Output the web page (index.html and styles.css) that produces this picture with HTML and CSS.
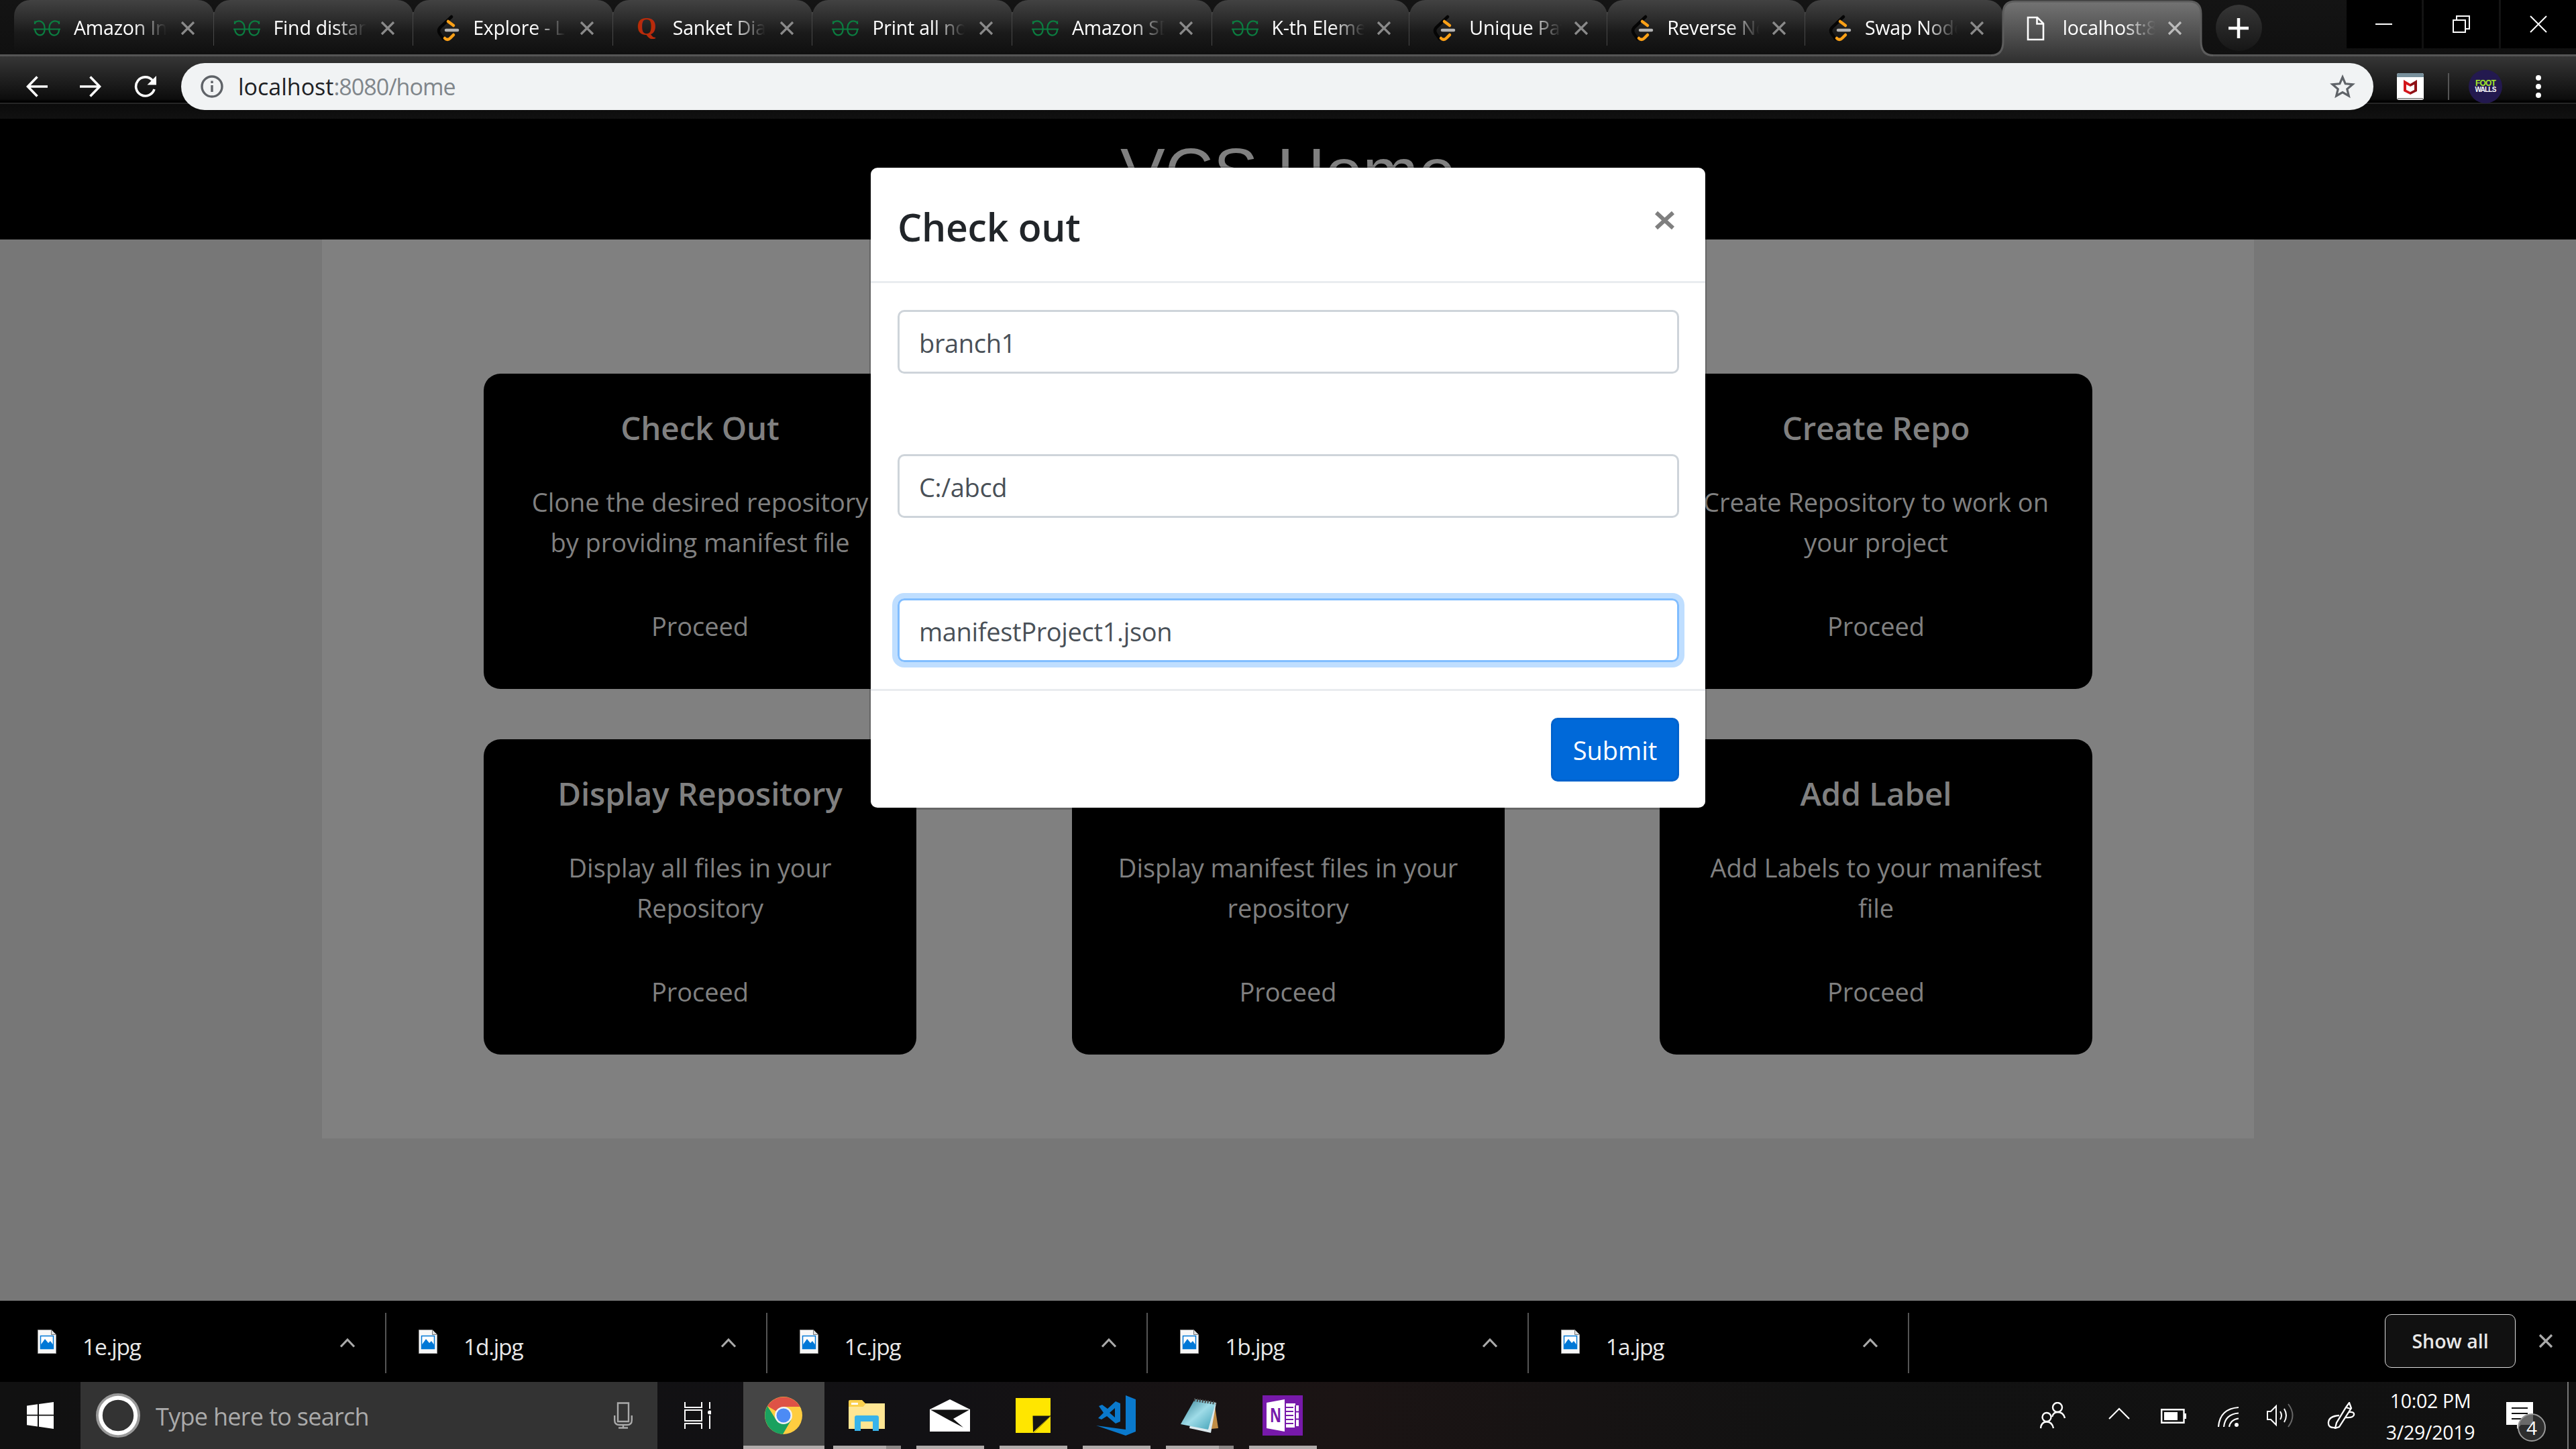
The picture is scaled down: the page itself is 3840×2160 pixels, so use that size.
FILE: index.html
```html
<!DOCTYPE html>
<html lang="en">
<head>
<meta charset="utf-8">
<title>VCS Home</title>
<link rel="stylesheet" href="styles.css">
</head>
<body>
<svg class="sprite" aria-hidden="true">
  <defs>
    <linearGradient id="g-active" x1="0" y1="0" x2="0" y2="1"><stop offset="0" stop-color="#747474"/><stop offset="1" stop-color="#353535"/></linearGradient>
    <linearGradient id="g-pad" x1="0" y1="0" x2="1" y2="1"><stop offset="0" stop-color="#2e7c90"/><stop offset=".5" stop-color="#9fdce8"/><stop offset="1" stop-color="#3d9fb5"/></linearGradient>
  </defs>
  <symbol id="i-gfg" viewBox="0 0 40 24"><g fill="none" stroke="#0b7d40" stroke-width="2.2"><path d="M2 6V1.500M2 4C5 1 9 1 12 2.500C18 6 18 18 13 21.500C8 24 3 21 2 13.500M0 13.500H40M38 6V1.500M38 4C35 1 31 1 28 2.500C22 6 22 18 27 21.500C32 24 38 22 38 13.500"/></g></symbol>
  <symbol id="i-leet" viewBox="0 0 34 40"><g fill="none" stroke-linecap="round"><path d="M22 3L5 19Q1 24 5 29L10 36" stroke="#050505" stroke-width="4.500"/><path d="M17 10L25 16M12 35Q16 39 20 35L25 30" stroke="#ffa116" stroke-width="4.500"/><path d="M14 23H31" stroke="#b3b3b3" stroke-width="4.500"/></g></symbol>
  <symbol id="i-x" viewBox="0 0 22 22"><path d="M2 2L20 20M20 2L2 20" fill="none" stroke="currentColor" stroke-width="3.200"/></symbol>
  <symbol id="i-page" viewBox="0 0 27 37"><path d="M2 2H16L25 11V35H2ZM15.500 2V11.500H25" fill="none" stroke="#fff" stroke-width="2.600"/></symbol>
  <symbol id="i-back" viewBox="0 0 32 32"><path d="M16.500 1.500L2.500 16L16.500 30.500M2 16H32" fill="none" stroke="#fff" stroke-width="3.600"/></symbol>
  <symbol id="i-reload" viewBox="0 0 34 34"><path d="M28 7.500A14 14 0 1 0 31 21" fill="none" stroke="#fff" stroke-width="3.600"/><path d="M34 1V14.500H20.500Z" fill="#fff"/></symbol>
  <symbol id="i-info" viewBox="0 0 34 34"><circle cx="17" cy="17" r="15" fill="none" stroke="#5f6368" stroke-width="3.400"/><path d="M17 15V25M17 8.500V12" stroke="#5f6368" stroke-width="3.400"/></symbol>
  <symbol id="i-star" viewBox="0 0 38 36"><path d="M19 4L23.200 13.800L34 14.700L25.800 21.800L28.300 32L19 26.500L9.700 32L12.200 21.800L4 14.700L14.800 13.800Z" fill="none" stroke="#5f6368" stroke-width="3.200"/></symbol>
  <symbol id="i-jpg" viewBox="0 0 28 36"><path d="M.5 .5H20.500L27.500 7.500V35.500H.5Z" fill="#f7f7f7" stroke="#999"/><path d="M20.500 .5V7.500H27.500" fill="#ddd" stroke="#777"/><path d="M4.500 9.500H23.500V28.500H4.500Z" fill="#fff" stroke="#0078d7" stroke-width="1.500"/><path d="M4.500 23L11 14L16 20L19 17L23.500 23V29H4.500Z" fill="#0078d7"/></symbol>
  <symbol id="i-up" viewBox="0 0 24 15"><path d="M2 13.500L12 3L22 13.500" fill="none" stroke="#aaa" stroke-width="3.200"/></symbol>
</svg>

<header class="browser">
  <div class="strip">
    <div class="tab"><svg class="fav gfg"><use href="#i-gfg"/></svg><span class="tt">Amazon Int</span><svg class="tx"><use href="#i-x"/></svg></div>
    <div class="tab"><svg class="fav gfg"><use href="#i-gfg"/></svg><span class="tt">Find distanc</span><svg class="tx"><use href="#i-x"/></svg></div>
    <div class="tab"><svg class="fav leet"><use href="#i-leet"/></svg><span class="tt">Explore - Le</span><svg class="tx"><use href="#i-x"/></svg></div>
    <div class="tab"><span class="fav quora">Q</span><span class="tt">Sanket Diak</span><svg class="tx"><use href="#i-x"/></svg></div>
    <div class="tab"><svg class="fav gfg"><use href="#i-gfg"/></svg><span class="tt">Print all nod</span><svg class="tx"><use href="#i-x"/></svg></div>
    <div class="tab"><svg class="fav gfg"><use href="#i-gfg"/></svg><span class="tt">Amazon SD</span><svg class="tx"><use href="#i-x"/></svg></div>
    <div class="tab narrow"><svg class="fav gfg"><use href="#i-gfg"/></svg><span class="tt">K-th Elemer</span><svg class="tx"><use href="#i-x"/></svg></div>
    <div class="tab narrow"><svg class="fav leet"><use href="#i-leet"/></svg><span class="tt">Unique Pat</span><svg class="tx"><use href="#i-x"/></svg></div>
    <div class="tab narrow"><svg class="fav leet"><use href="#i-leet"/></svg><span class="tt">Reverse No</span><svg class="tx"><use href="#i-x"/></svg></div>
    <div class="tab narrow last"><svg class="fav leet"><use href="#i-leet"/></svg><span class="tt">Swap Node</span><svg class="tx"><use href="#i-x"/></svg></div>
    <div class="tab narrow active">
      <svg class="shape" viewBox="0 0 331 86"><path d="M0 86V82.500Q18 82.500 18 62V20Q18 2 36 2H295Q313 2 313 20V62Q313 82.500 331 82.500V86Z" fill="url(#g-active)"/><path d="M0 82.500Q18 82.500 18 62V20Q18 2 36 2H295Q313 2 313 20V62Q313 82.500 331 82.500" fill="none" stroke="#5c5c5c" stroke-width="3"/></svg>
      <svg class="fav page"><use href="#i-page"/></svg><span class="tt">localhost:80</span><svg class="tx"><use href="#i-x"/></svg>
    </div>
    <div class="plus"><svg viewBox="0 0 30 30"><path d="M15 0V30M0 15H30" stroke="#fff" stroke-width="4.500"/></svg></div>
    <div class="win">
      <div><svg viewBox="0 0 26 26"><path d="M0 13H25" stroke="#fff" stroke-width="2"/></svg></div>
      <div><svg viewBox="0 0 26 26"><path d="M1 7H19V25H1ZM6 7V1H25V20H19" fill="none" stroke="#fff" stroke-width="2"/></svg></div>
      <div><svg viewBox="0 0 26 26"><path d="M1 1L25 25M25 1L1 25" stroke="#fff" stroke-width="2"/></svg></div>
    </div>
  </div>
  <div class="toolbar">
    <svg class="nav"><use href="#i-back"/></svg>
    <svg class="nav fwd"><use href="#i-back"/></svg>
    <svg class="nav"><use href="#i-reload"/></svg>
    <div class="omni"><svg class="info"><use href="#i-info"/></svg><span class="url">localhost<i>:8080/home</i></span><svg class="star"><use href="#i-star"/></svg></div>
    <svg class="mcafee" viewBox="0 0 40 40"><rect width="40" height="40" rx="3" fill="#fff"/><path d="M0 6V3Q0 0 3 0H37Q40 0 40 3V6Z" fill="#78909c"/><path d="M1 38H39" stroke="#999" stroke-width="2"/><path d="M10 10L20 16V20L14 17V25L20 28V32L10 27Z" fill="#d3161b"/><path d="M30 10L20 16V20L26 17V25L20 28V32L30 27Z" fill="#8e1216"/></svg>
    <div class="bar"></div>
    <div class="avatar"><span class="foot">FOOT</span><span class="walls">WALLS</span></div>
    <div class="dots"><b></b><b></b><b></b></div>
  </div>
</header>

<main class="page">
  <div class="masthead"><h1>VCS Home</h1></div>
  <div class="panel">
    <section class="card"><h2>Check Out</h2><p>Clone the desired repository<br>by providing manifest file</p><a>Proceed</a></section>
    <section class="card third"><h2>Create Repo</h2><p>Create Repository to work on<br>your project</p><a>Proceed</a></section>
    <section class="card"><h2>Display Repository</h2><p>Display all files in your<br>Repository</p><a>Proceed</a></section>
    <section class="card"><h2></h2><p>Display manifest files in your<br>repository</p><a>Proceed</a></section>
    <section class="card"><h2>Add Label</h2><p>Add Labels to your manifest<br>file</p><a>Proceed</a></section>
  </div>
  <div class="modal">
    <div class="mhead"><h3>Check out</h3><svg class="mclose" viewBox="0 0 29 27"><path d="M2 2L27 25M27 2L2 25" stroke="#7f7f7f" stroke-width="6"/></svg></div>
    <div class="mbody"><div class="field">branch1</div><div class="field">C:/abcd</div><div class="field focus">manifestProject1.json</div></div>
    <div class="mfoot"><button class="submit">Submit</button></div>
  </div>
</main>

<div class="downloads">
  <div class="dl first"><svg class="file"><use href="#i-jpg"/></svg><span>1e.jpg</span><svg class="up"><use href="#i-up"/></svg></div>
  <div class="dl"><svg class="file"><use href="#i-jpg"/></svg><span>1d.jpg</span><svg class="up"><use href="#i-up"/></svg></div>
  <div class="dl"><svg class="file"><use href="#i-jpg"/></svg><span>1c.jpg</span><svg class="up"><use href="#i-up"/></svg></div>
  <div class="dl"><svg class="file"><use href="#i-jpg"/></svg><span>1b.jpg</span><svg class="up"><use href="#i-up"/></svg></div>
  <div class="dl"><svg class="file"><use href="#i-jpg"/></svg><span>1a.jpg</span><svg class="up"><use href="#i-up"/></svg></div>
  <button class="showall">Show all</button>
  <svg class="dx"><use href="#i-x"/></svg>
</div>

<footer class="taskbar">
  <div class="start"><svg viewBox="0 0 40 40"><path d="M0 5.500L16 3.200V18.800H0ZM18 3L40 0V18.800H18ZM0 20.500H16V36.500L0 34.200ZM18 20.500H40V40L18 36.800Z" fill="#fff"/></svg></div>
  <div class="search">
    <svg class="ring" viewBox="0 0 66 66"><circle cx="33" cy="33" r="31" fill="none" stroke="#999" stroke-width="4"/><circle cx="33" cy="33" r="26.200" fill="none" stroke="#fff" stroke-width="6"/></svg>
    <span>Type here to search</span>
    <svg class="mic" viewBox="0 0 28 40"><path d="M6 1.500H22V29H6ZM1.200 20V27Q1.200 34 8 34H20Q26.800 34 26.800 27V20M14 34V38.500M7 38.500H21" fill="none" stroke="#aaa" stroke-width="2.400"/></svg>
  </div>
  <div class="view"><svg viewBox="0 0 40 40"><path d="M1 0V8H26V0M1 40V32H26V40M1 12H26V28H1ZM38 0V10M38 20V40" fill="none" stroke="#fff" stroke-width="2"/><circle cx="38" cy="15.500" r="3" fill="#fff"/></svg></div>
  <div class="app on"><svg width="56" height="56" viewBox="0 0 56 56"><circle cx="28" cy="28" r="28" fill="#ffcd40"/><path d="M28 28L4 14A28 28 0 0 1 52.500 15H28Z" fill="#de5246"/><path d="M4 14A28 28 0 0 0 27 56L39.500 34.500L16 33Z" fill="#1aa15f"/><circle cx="28" cy="28" r="13" fill="#f2f2f2"/><circle cx="28" cy="28" r="10.500" fill="#4c8bf5"/></svg></div>
  <div class="app multi"><svg width="54" height="46" viewBox="0 0 54 46"><path d="M0 2Q0 0 2 0H20L25 5H52Q54 5 54 7V43H0Z" fill="#fbd04c"/><path d="M0 10H54V43H0Z" fill="#ffe693"/><path d="M26 5H54V12H20Z" fill="#ffe693"/><path d="M4 4H14V7H4Z" fill="#fff"/><path d="M9 46V26Q9 23 12 23H42Q45 23 45 26V46H36V32H18V46Z" fill="#38b3ea"/></svg></div>
  <div class="app"><svg width="60" height="48" viewBox="0 0 60 48"><path d="M0 15L30 0L60 15V48H0Z" fill="#fff"/><path d="M1 15.500H59L35 29L50 42L29 31Z" fill="#111"/></svg></div>
  <div class="app"><svg width="52" height="52" viewBox="0 0 52 52"><path d="M0 0H52V26L27 52H0Z" fill="#ffe600"/><path d="M25.500 26.500H52L26 51Z" fill="#151515"/><path d="M52 27L27 52H52Z" fill="#ffe600"/></svg></div>
  <div class="app"><svg width="60" height="60" viewBox="0 0 60 60"><path d="M44 0L59 6V54L44 60L0 45L44 51ZM4 16L9 14L17 20L29 9L36 12V39L29 42L16 31L8 36L3 34L11 26ZM28 19L20 26L28 33Z" fill="#0a79cc" fill-rule="evenodd"/></svg></div>
  <div class="app multi"><svg width="56" height="53" viewBox="0 0 56 53"><path d="M50 6L56 45L46 46Z" fill="#c08c45"/><path d="M22 2L53 7L45 52L13 45Z" fill="#dce9ed"/><path d="M21 2L52 7L41 47L0 39Z" fill="url(#g-pad)"/><path d="M20 2.500L52 7.500" stroke="#444" stroke-width="5" stroke-dasharray="2 2"/></svg></div>
  <div class="app"><svg width="60" height="60" viewBox="0 0 60 60"><rect width="60" height="60" fill="#7719aa"/><path d="M35 12H49V15H54V46H49V48H35Z" fill="#fff"/><path d="M35 18H46M35 24H46M35 30H46M35 36H46M35 42H46M49 24.500H54M49 35.500H54M49 15V48" stroke="#7719aa" stroke-width="2"/><path d="M6 11L33 6V54L6 49Z" fill="#fff"/><text x="19.500" y="40" text-anchor="middle" font-family="Open Sans" font-weight="700" font-size="28" textLength="17" lengthAdjust="spacingAndGlyphs" fill="#7719aa">N</text></svg></div>
  <div class="tray">
    <svg class="people" viewBox="0 0 38 40"><g fill="none" stroke="#fff" stroke-width="2.400"><circle cx="26" cy="8" r="7"/><circle cx="10" cy="22.500" r="6.500"/><path d="M18 22Q20 15 26 15Q35 15 37 24M1 39Q2 29.500 10 29.500Q18 29.500 20 39"/></g></svg>
    <svg class="chev" viewBox="0 0 32 18"><path d="M1 17L16 2L31 17" fill="none" stroke="#fff" stroke-width="2.200"/></svg>
    <svg class="batt" viewBox="0 0 38 22"><path d="M1.200 1.200H34.500V20.800H1.200Z" fill="none" stroke="#fff" stroke-width="2.400"/><path d="M5 5H25V17H5ZM35 7H38V15H35Z" fill="#fff"/></svg>
    <svg class="wifi" viewBox="0 0 32 32"><g fill="none" stroke="#fff" stroke-width="2.200"><path d="M1 31Q3 4 31 2M9 31Q11 12 31 10.500M17 31Q19 20 31 18.500"/></g><circle cx="28" cy="28" r="3" fill="#fff"/></svg>
    <svg class="spk" viewBox="0 0 42 38"><g fill="none" stroke="#fff" stroke-width="2"><path d="M1 13H6L14 5V33L6 25H1ZM20 13Q24 19 20 25M26 9Q32 19 26 29"/><path d="M32 2Q45 19 32 36" stroke="#666"/></g></svg>
    <svg class="pen" viewBox="0 0 42 40"><path d="M28 8L33 1L36 9L18 37L12 39L14 31ZM28 8L35 10M18 20Q3 21 2 30Q1 39 12 38M32 15Q41 14 40 19Q39 24 27 23" fill="none" stroke="#fff" stroke-width="2.300"/></svg>
    <div class="clock"><span>10:02 PM</span><span>3/29/2019</span></div>
    <div class="notes"><svg viewBox="0 0 40 40"><path d="M0 0H40V34H22L16 40V34H0Z" fill="#fff"/><path d="M8 9H32M8 17H32M8 25H24" stroke="#111" stroke-width="2.200"/></svg><span class="badge">4</span></div>
    <div class="desk"></div>
  </div>
</footer>
</body>
</html>
```
FILE: styles.css
```css
* { box-sizing: border-box; }
body { margin: 0; width: 3840px; height: 2160px; overflow: hidden; display: flex; flex-direction: column; background: #000; font-family: "Open Sans", "Noto Sans", sans-serif; }
svg { display: block; flex: none; }
.sprite { position: absolute; width: 0; height: 0; }
h1, h2, h3, p { margin: 0; }
button { font-family: inherit; padding: 0; }

.browser { height: 177px; flex: none; }
.strip { height: 84px; display: flex; padding-left: 21px; background: linear-gradient(#141414, #101010); border-bottom: 3px solid #555; }
.tab { position: relative; width: 297.6px; height: 81px; flex: none; display: flex; align-items: center; padding: 0 0 4px 29px; background: linear-gradient(#424242, #2c2c2c 35%, #1a1a1a 60%, #0f0f0f); border-radius: 24px 24px 0 0 / 24px 24px 0 0; }
.tab.narrow { width: 294.8px; }
.tab::after { content: ""; position: absolute; right: -1px; top: 18px; width: 2px; height: 50px; background: #484848; }
.tab.last::after, .tab.active::after { display: none; }
.tab.active { background: none; }
.shape { position: absolute; left: -18px; top: 0; width: 331px; height: 86px; }
.fav { position: relative; width: 40px; margin-right: 20px; }
.gfg { height: 24px; margin-top: 7px; }
.leet { height: 40px; width: 34px; margin: 6px 20px 0 6px; }
.page.fav { width: 27px; height: 37px; margin: 7px 27px 0 6px; }
.quora { font: bold 38px/40px "Liberation Serif", serif; color: #b92b0a; width: 34px; margin: 0 20px 0 6px; }
.tt { position: relative; width: 138px; overflow: hidden; white-space: nowrap; color: #fff; font-size: 28.500px; line-height: 44px; margin-top: 4px; letter-spacing: -.2px; -webkit-mask-image: linear-gradient(90deg, #000 65%, transparent); mask-image: linear-gradient(90deg, #000 65%, transparent); }
.tx { position: relative; width: 22px; height: 22px; margin: 6px 0 0 21px; color: #8a8a8a; }
.narrow .tx { margin-left: 18px; }
.active .tx { color: #bbb; }
.plus { width: 69px; height: 69px; margin: 7px 0 0 22px; border-radius: 50%; background: linear-gradient(#363636, #161616); display: grid; place-items: center; }
.plus svg { width: 30px; height: 30px; }
.win { display: flex; gap: 3px; margin-left: auto; height: 72px; }
.win div { width: 112px; background: #000; display: grid; place-items: center; }
.win svg { width: 26px; height: 26px; }
.toolbar { height: 93px; padding: 10px 0 13px 39px; display: flex; align-items: center; background: linear-gradient(#363636, #0c0c0c 64px, #000 67px, #000 69px, #262626 69px, #262626 71px, #0b0b0b 71px, #111); }
.nav { width: 32px; height: 32px; margin-right: 48px; }
.nav.fwd { transform: scaleX(-1); }
.nav:nth-child(3) { width: 34px; height: 34px; margin-right: 37px; }
.omni { width: 3268px; height: 70px; border-radius: 35px; background: #f1f3f4; display: flex; align-items: center; padding: 0 27px 0 29px; }
.info { width: 34px; height: 34px; }
.url { margin-left: 22px; font-size: 34px; line-height: 50px; color: #202124; }
.url i { font-style: normal; color: #80868b; letter-spacing: -1px; }
.star { width: 38px; height: 36px; margin-left: auto; }
.mcafee { width: 40px; height: 40px; margin-left: 35px; }
.bar { width: 2px; height: 40px; background: #555; margin-left: 36px; }
.avatar { width: 50px; height: 50px; border-radius: 50%; margin-left: 29px; background: #23194f; display: flex; flex-direction: column; align-items: center; justify-content: center; font: bold 12px/10px "Liberation Sans", sans-serif; letter-spacing: -.8px; }
.foot { color: #a4e82a; }
.walls { color: #fff; font-size: 10px; }
.dots { display: flex; flex-direction: column; gap: 5px; margin-left: 50px; }
.dots b { width: 8px; height: 8px; border-radius: 50%; background: #fff; }

main.page { position: relative; height: 1762px; flex: none; background: #777; }
.masthead { height: 180px; background: #000; padding-top: 19px; }
.masthead h1 { font: 400 100px/120px "Liberation Sans", sans-serif; color: #808080; text-align: center; }
.panel { width: 2880px; height: 1340px; margin: 0 auto; padding: 200px 241px 0; background: #808080; display: grid; grid-template-columns: repeat(3, 645px); grid-auto-rows: 470px; justify-content: space-between; row-gap: 75px; }
.card { background: #000; border-radius: 25px; padding-top: 51px; text-align: center; color: #808080; font-size: 38px; line-height: 60px; white-space: nowrap; letter-spacing: -.05px; }
.card.third { grid-column: 3; }
.card h2 { height: 60px; font-size: 47.500px; font-weight: 600; line-height: 60px; margin-bottom: 50px; }
.card a { display: block; margin-top: 65px; }
.modal { position: absolute; left: 1296px; top: 71px; width: 1248px; height: 959px; background: #fff; background-clip: padding-box; border: 2px solid rgba(0,0,0,.2); border-bottom-width: 3px; border-radius: 12px; }
.mhead { height: 172px; display: flex; justify-content: space-between; padding: 43px 46px 0 40px; border-bottom: 3px solid #e9ecef; }
.mhead h3 { font-size: 57px; line-height: 90px; font-weight: 600; color: #212529; letter-spacing: -.2px; }
.mclose { width: 29px; height: 27px; margin-top: 22px; }
.mbody { padding: 40px 39px 40px 40px; display: flex; flex-direction: column; gap: 120px; height: 605px; }
.field { height: 95px; border: 3px solid #ced4da; border-radius: 10px; padding: 2px 29px; font-size: 38px; line-height: 89px; color: #495057; letter-spacing: -.35px; }
.field.focus { border-color: #80bdff; box-shadow: 0 0 0 8px #bfdeff; }
.mfoot { border-top: 3px solid #e9ecef; padding: 40px 39px 0; display: flex; justify-content: flex-end; }
.submit { width: 191px; height: 95px; border: 3px solid #0062cc; border-radius: 10px; background: #0069d9; color: #fff; font-size: 38px; }

.downloads { height: 121px; flex: none; display: flex; background: #000; padding-left: 7px; }
.dl { width: 567.600px; height: 90px; margin-top: 18px; display: flex; border-right: 2px solid #555; padding: 0 44px 0 48px; color: #e8e8e8; font-size: 33.500px; line-height: 48px; letter-spacing: -1.200px; }
.dl.first { width: 569px; padding-left: 49px; }
.file { width: 28px; height: 36px; margin-top: 25px; }
.dl span { margin: 26px 0 0 39px; }
.up { width: 24px; height: 15px; margin: 37px 0 0 auto; }
.showall { width: 195px; height: 80px; margin: 20px 34px 0 auto; background: #111; border: 1.500px solid #ddd; border-radius: 10px; color: #e8e8e8; font-size: 28.500px; font-weight: 600; }
.dx { width: 22px; height: 22px; margin: 49px 34px 0 0; color: #aaa; }

.taskbar { height: 100px; flex: none; display: flex; background: linear-gradient(90deg, #111 0, #121114 1400px, #1b1414 2000px, #121212 2700px, #111); }
.start { width: 120px; display: grid; place-items: center; }
.start svg { width: 40px; height: 40px; }
.search { width: 860px; background: #333; display: flex; align-items: center; padding: 0 37px 0 23px; color: #aaa; font-size: 36px; letter-spacing: -.7px; }
.ring { width: 66px; height: 66px; }
.search span { margin: 3px 0 0 23px; }
.mic { width: 28px; height: 40px; margin-left: auto; }
.view { width: 128px; display: flex; align-items: center; padding-left: 40px; }
.view svg { width: 40px; height: 40px; }
.app { position: relative; width: 101px; margin-right: 23px; display: grid; place-items: center; border-bottom: 5px solid #b0abaa; }
.app svg { margin: 5px 1px 0 0; }
.app.on { width: 121px; margin-right: 13px; background: #454545; }
.app.multi::after { content: ""; position: absolute; right: 0; bottom: -5px; width: 22px; height: 5px; background: #8a8685; }
.tray { margin-left: auto; display: flex; align-items: center; }
.people { width: 38px; height: 40px; margin-right: 64px; }
.chev { width: 32px; height: 18px; margin: 0 46px 6px 0; }
.batt { width: 38px; height: 22px; margin: 2px 47px 0 0; }
.wifi { width: 32px; height: 32px; margin: 4px 41px 0 0; }
.spk { width: 42px; height: 38px; margin-right: 48px; }
.pen { width: 42px; height: 40px; margin-right: 40px; }
.clock { width: 144px; display: flex; flex-direction: column; text-align: center; color: #fff; font-size: 28.500px; line-height: 47px; white-space: nowrap; letter-spacing: -.3px; padding-top: 4px; }
.notes { position: relative; width: 40px; height: 40px; margin: 0 51px 0 41px; }
.notes svg { width: 40px; height: 40px; }
.badge { position: absolute; left: 17px; top: 17px; width: 42px; height: 42px; border: 2px solid #999; border-radius: 50%; background: rgba(55,55,55,.75); color: #fff; font-size: 28px; line-height: 38px; text-align: center; }
.desk { width: 2px; height: 100px; background: #777; margin-right: 11px; }
```
